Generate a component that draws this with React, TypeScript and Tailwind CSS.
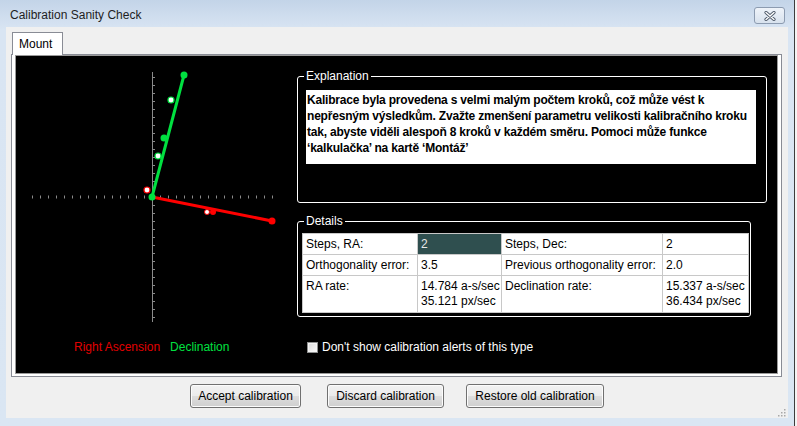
import React from 'react'

const ui = { fontFamily: '"Liberation Sans", Arial, sans-serif' }

const vTicks: number[] = []
for (let y = 77; y <= 317; y += 8) vTicks.push(y)
const hTicks: number[] = []
for (let x = 32; x <= 272; x += 8) hTicks.push(x)

function CalChart() {
  return (
    <svg width={281} height={276} viewBox="16 56 281 276" className="block">
      <line x1={152.5} y1={72} x2={152.5} y2={322} stroke="#8a8a8a" strokeWidth={1} />
      {vTicks.map((y) => (
        <line key={'v' + y} x1={152} y1={y + 0.5} x2={155} y2={y + 0.5} stroke="#8a8a8a" strokeWidth={1} />
      ))}
      {hTicks.map((x) => (
        <line key={'h' + x} x1={x + 0.5} y1={195.5} x2={x + 0.5} y2={198.5} stroke="#8a8a8a" strokeWidth={1} />
      ))}
      {/* RA */}
      <line x1={152} y1={197} x2={272} y2={221} stroke="#ff0000" strokeWidth={3} strokeLinecap="round" />
      <circle cx={213} cy={212} r={3} fill="#ff0000" />
      <circle cx={207} cy={212} r={2.5} fill="#fff" stroke="#ff0000" strokeWidth={1} />
      <circle cx={272} cy={221} r={3.5} fill="#ff0000" />
      <circle cx={147} cy={190} r={3} fill="#fff" stroke="#ff0000" strokeWidth={1.2} />
      {/* Dec */}
      <line x1={152} y1={197} x2={184} y2={75} stroke="#00e040" strokeWidth={3} strokeLinecap="round" />
      <circle cx={184} cy={75} r={3.5} fill="#00e040" />
      <circle cx={164} cy={138} r={3.5} fill="#00e040" />
      <circle cx={171} cy={100} r={3} fill="#fff" stroke="#00e040" strokeWidth={1.2} />
      <circle cx={158} cy={156} r={3} fill="#fff" stroke="#00e040" strokeWidth={1.2} />
      <circle cx={152} cy={197} r={3.5} fill="#00e040" />
    </svg>
  )
}

function GroupBox({
  label,
  className,
  children,
}: {
  label: string
  className: string
  children: React.ReactNode
}) {
  return (
    <div className={`relative border border-white rounded-[3px] ${className}`}>
      <span className="absolute -top-[8px] left-[6px] bg-black px-[2px] text-[12px] leading-[14px] text-white">
        {label}
      </span>
      {children}
    </div>
  )
}

function Button({ label, className }: { label: string; className: string }) {
  return (
    <button
      className={`${className} h-[24px] rounded-[3px] border border-[#707070] text-[12px] text-black bg-[linear-gradient(#f2f2f2_0%,#ebebeb_50%,#dddddd_50%,#cfcfcf_100%)] shadow-[inset_0_0_0_1px_#fcfcfc]`}
    >
      {label}
    </button>
  )
}

const cell = 'border border-[#c8c8c8] px-[3px] pt-[3px] align-top text-black whitespace-nowrap overflow-hidden'

export default function App() {
  return (
    <div
      style={ui}
      className="w-[797px] h-[426px] overflow-hidden flex bg-[linear-gradient(#c3d4e8,#d9e5f3_30px,#dae6f3)]"
    >
      <div className="w-[794px] flex flex-col">
        {/* title bar */}
        <div className="h-[27px] flex items-start">
          <div className="pl-[10px] pt-[7px] text-[12px] leading-[16px] text-[#1e1e1e]">
            Calibration Sanity Check
          </div>
          <div className="ml-auto mr-[9px] mt-[7px] w-[31px] h-[17px] rounded-[3px] border border-[#8c9bb0] bg-[linear-gradient(#eef3f9,#d8e2ee)] flex items-center justify-center">
            <svg width="12" height="10" viewBox="0 0 12 10">
              <path d="M2 1.5 L10 8.5 M10 1.5 L2 8.5" stroke="#4e5a6a" strokeWidth={3.2} strokeLinecap="round" />
              <path d="M2 1.5 L10 8.5 M10 1.5 L2 8.5" stroke="#ffffff" strokeWidth={1.4} strokeLinecap="round" />
            </svg>
          </div>
        </div>

        {/* client */}
        <div className="ml-[6px] w-[782px] h-[391px] bg-[#f0f0f0] flex flex-col">
          <div className="ml-[6px] mt-[5px] w-[51px] h-[23px] -mb-px relative z-10 bg-white border border-b-0 border-[#898c95] pl-[6px] pt-[3px] text-[12px] leading-[16px] text-black">
            Mount
          </div>
          <div className="ml-[5px] w-[771px] h-[323px] border border-[#898c95] bg-white px-[3px] pb-[2px]">
            <div className="h-full border border-[#9a9a9a] bg-black flex">
              {/* left: chart */}
              <div className="w-[281px] flex flex-col">
                <CalChart />
                <div className="pl-[58px] pt-[7px] flex gap-[10px] text-[12px] leading-[16px]">
                  <span className="text-[#e00000]">Right Ascension</span>
                  <span className="text-[#00e040]">Declination</span>
                </div>
              </div>

              {/* right */}
              <div className="flex flex-col pt-[20px]">
                <GroupBox label="Explanation" className="w-[470px] h-[127px] pt-[13px] pl-[8px]">
                  <div className="w-[450px] h-[74px] bg-white pl-[1px] pt-[2px] text-[12px] leading-[16px] font-bold text-black tracking-[-0.2px]">
                    Kalibrace byla provedena s velmi malým počtem kroků, což může vést k<br />
                    nepřesným výsledkům. Zvažte zmenšení parametru velikosti kalibračního kroku<br />
                    tak, abyste viděli alespoň 8 kroků v každém směru. Pomoci může funkce<br />
                    ‘kalkulačka’ na kartě ‘Montáž’
                  </div>
                </GroupBox>

                <GroupBox label="Details" className="mt-[18px] w-[454px] h-[96px] pt-[11px] pl-[4px]">
                  <table className="table-fixed w-[446px] border-collapse text-[12px] leading-[14px] bg-white">
                    <colgroup>
                      <col className="w-[115px]" />
                      <col className="w-[84px]" />
                      <col className="w-[161px]" />
                      <col className="w-[86px]" />
                    </colgroup>
                    <tbody>
                      <tr className="h-[21px]">
                        <td className={cell}>Steps, RA:</td>
                        <td className={`${cell} bg-[#2f4f4f] !text-[#e8e8e8]`}>2</td>
                        <td className={cell}>Steps, Dec:</td>
                        <td className={cell}>2</td>
                      </tr>
                      <tr className="h-[21px]">
                        <td className={cell}>Orthogonality error:</td>
                        <td className={cell}>3.5</td>
                        <td className={cell}>Previous orthogonality error:</td>
                        <td className={cell}>2.0</td>
                      </tr>
                      <tr className="h-[37px]">
                        <td className={cell}>RA rate:</td>
                        <td className={`${cell} leading-[15px]`}>
                          14.784 a-s/sec
                          <br />
                          35.121 px/sec
                        </td>
                        <td className={cell}>Declination rate:</td>
                        <td className={`${cell} leading-[15px]`}>
                          15.337 a-s/sec
                          <br />
                          36.434 px/sec
                        </td>
                      </tr>
                    </tbody>
                  </table>
                </GroupBox>

                <label className="mt-[22px] ml-[10px] flex items-center gap-[4px] text-[12px] leading-[16px] text-white">
                  <span className="w-[11px] h-[11px] border border-[#8e8f8f] bg-[linear-gradient(135deg,#dcdcdc,#fbfbfb)] shadow-[inset_0_0_0_1px_#f4f4f4]" />
                  Don't show calibration alerts of this type
                </label>
              </div>
            </div>
          </div>

          {/* buttons */}
          <div className="mt-[7px] flex pl-[184px]">
            <Button label="Accept calibration" className="w-[111px]" />
            <Button label="Discard calibration" className="ml-[26px] w-[117px]" />
            <Button label="Restore old calibration" className="ml-[22px] w-[138px]" />
          </div>

          <div className="mt-auto mb-[1px] mr-[2px] self-end">
            <svg width="9" height="9" viewBox="0 0 9 9">
              {[
                [7, 1],
                [7, 4],
                [4, 4],
                [7, 7],
                [4, 7],
                [1, 7],
              ].map(([x, y]) => (
                <rect key={`${x}-${y}`} x={x} y={y} width={1.5} height={1.5} fill="#a8a8a8" />
              ))}
            </svg>
          </div>
        </div>
      </div>
      <div className="w-[1px] bg-[#3c3c3c]" />
      <div className="w-[2px] bg-[#f4f4f4]" />
    </div>
  )
}
